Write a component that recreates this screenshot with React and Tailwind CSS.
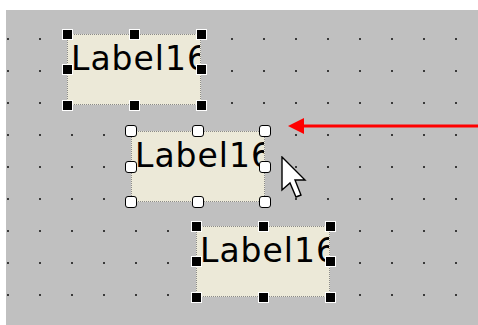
const labels = [
  { left: 61, top: 24, selected: true },
  { left: 125, top: 121, selected: false },
  { left: 190, top: 216, selected: true },
]

function Handle({ x, y, selected }) {
  return selected ? (
    <div
      className="absolute w-[11px] h-[11px] bg-black border border-white"
      style={{ left: x - 5.5, top: y - 5.5 }}
    />
  ) : (
    <div
      className="absolute w-[12px] h-[12px] bg-white border border-black rounded-[3px]"
      style={{ left: x - 6, top: y - 6 }}
    />
  )
}

function DesignLabel({ left, top, selected }) {
  const w = 134
  const h = 71
  const pts = [
    [0, 0], [w / 2, 0], [w, 0],
    [0, h / 2], [w, h / 2],
    [0, h], [w / 2, h], [w, h],
  ]
  return (
    <div className="absolute" style={{ left, top, width: w, height: h }}>
      <div className="absolute inset-0 bg-[#ece9d8] border border-dotted border-[#8a8a8a] overflow-hidden">
        <div className="pl-[3px] pt-[7px] text-[33px] leading-none tracking-[1px] text-black whitespace-nowrap font-['DejaVu_Sans',sans-serif]">
          Label16
        </div>
      </div>
      {pts.map(([x, y], i) => (
        <Handle key={i} x={x} y={y} selected={selected} />
      ))}
    </div>
  )
}

export default function App() {
  return (
    <div className="w-[478px] h-[325px] bg-white pt-[10px] pl-[6px]">
      <div className="relative w-full h-full bg-[#c0c0c0] overflow-hidden">
        {/* grid dots */}
        <svg className="absolute inset-0" width="100%" height="100%">
          <defs>
            <pattern id="dots" x="0" y="0" width="32" height="32" patternUnits="userSpaceOnUse">
              <rect x="1" y="28" width="2" height="2" fill="#3a3a3a" />
            </pattern>
          </defs>
          <rect width="100%" height="100%" fill="url(#dots)" />
        </svg>

        {labels.map((l, i) => (
          <DesignLabel key={i} {...l} />
        ))}

        {/* red arrow */}
        <svg className="absolute left-[280px] top-[106px]" width="200" height="20">
          <line x1="14" y1="10" x2="200" y2="10" stroke="#ff0000" strokeWidth="3" />
          <polygon points="2,10 18,2 18,18" fill="#ff0000" />
        </svg>

        {/* mouse cursor */}
        <svg className="absolute left-[275px] top-[146px]" width="26" height="44" viewBox="0 0 13 22">
          <path
            d="M0.5 0.5 L0.5 17 L4.5 13.5 L7.5 20.5 L10 19.5 L7 12 L12 12 Z"
            fill="#fff"
            stroke="#000"
            strokeWidth="0.7"
            strokeLinejoin="miter"
          />
        </svg>
      </div>
    </div>
  )
}
